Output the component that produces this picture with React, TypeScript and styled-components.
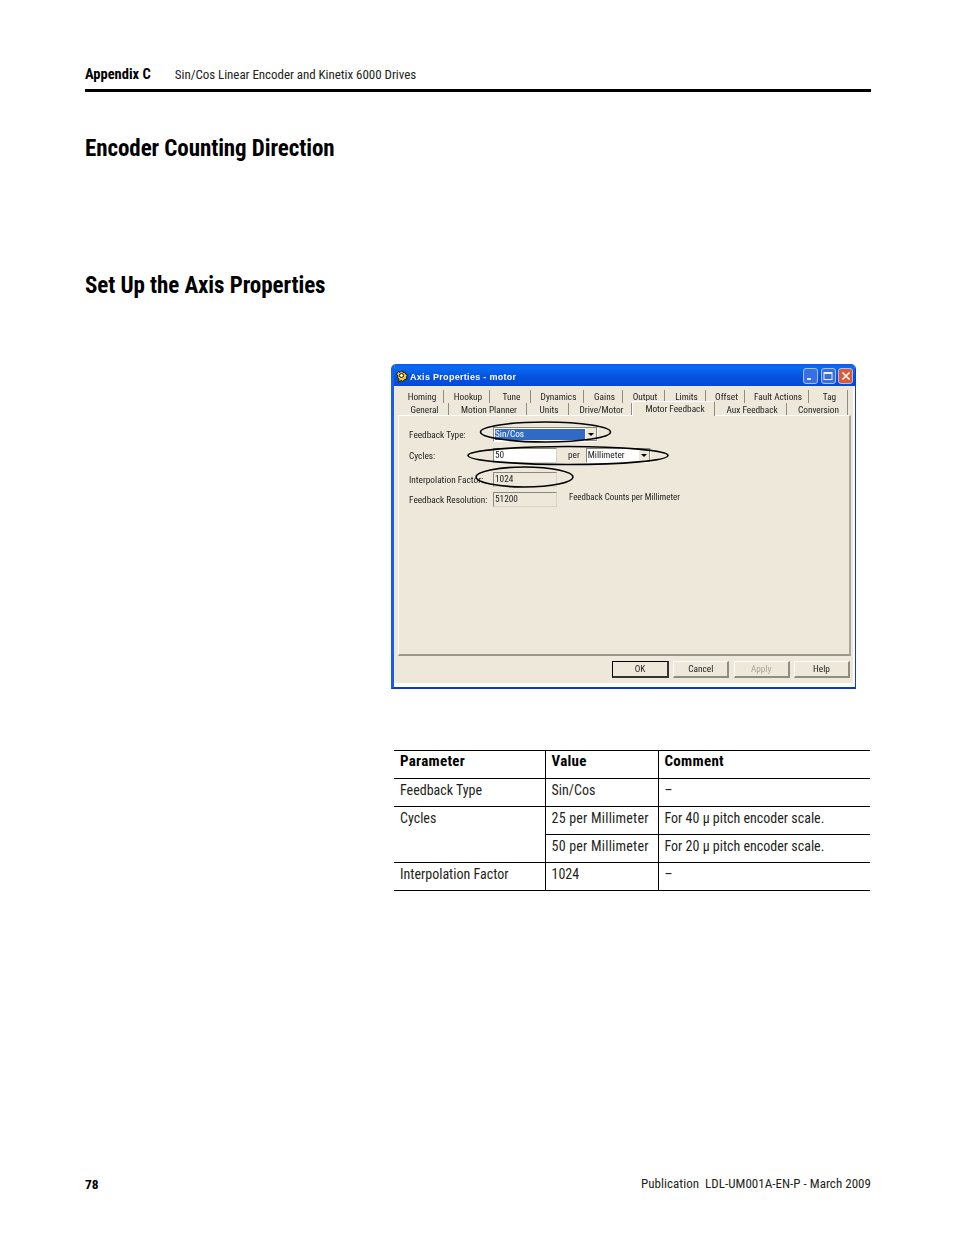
import React from "react";
import styled, { createGlobalStyle } from "styled-components";

const Global = createGlobalStyle`
  html, body { margin: 0; padding: 0; background: #fff; }
  body { font-family: "Roboto Condensed", "Liberation Sans", Arial, sans-serif; color: #231f20; }
`;

const Page = styled.div`
  width: 954px;
  height: 1235px;
  box-sizing: border-box;
  padding: 67px 83px 0 85px;
  display: flex;
  flex-direction: column;
  position: relative;
`;

const Header = styled.header`
  display: flex;
  align-items: flex-start;
  gap: 24px;
  height: 22px;
  border-bottom: 3px solid #000;
  font-size: 13px;
  line-height: 16px;
`;
const HeaderStrong = styled.b`
  font-size: 14.5px;
  font-weight: 700;
  color: #000;
`;
const HeaderTitle = styled.span`
  letter-spacing: -0.05px;
`;

const Heading = styled.h1`
  margin: 0;
  font-size: 23px;
  letter-spacing: -0.08px;
  line-height: 32px;
  font-weight: 700;
  color: #000;
`;
const FirstHeading = styled(Heading)`
  margin-top: 41px;
`;
const SecondHeading = styled(Heading)`
  margin-top: 105px;
`;

const Dialog = styled.div`
  margin: 62px 0 0 306px;
  width: 465px;
  height: 325px;
  box-sizing: border-box;
  border-left: 3px solid #1a5cf0;
  border-right: 1px solid #0a3fd0;
  border-bottom: 2px solid #0a3ac8;
  border-radius: 5px 5px 0 0;
  background: #fff;
  font-family: "Roboto Condensed", "Liberation Sans", Arial, sans-serif;
  font-size: 9.3px;
  color: #222;
  display: flex;
  flex-direction: column;
  position: relative;
  overflow: hidden;
  filter: blur(0.3px);
`;

const TitleBar = styled.div`
  height: 22px;
  flex: none;
  margin: 0 -1px 0 -3px;
  padding: 2px 3px 0 5px;
  box-sizing: border-box;
  display: flex;
  align-items: center;
  gap: 1px;
  background: linear-gradient(180deg, #0a5ce6 0%, #0a6cf2 15%, #0554e0 55%, #0449d6 100%);
  color: #fff;
  font-family: "Liberation Sans", Arial, sans-serif;
  font-size: 9px;
  font-weight: 700;
`;
const TitleText = styled.span`
  flex: 1;
  padding: 1px 0 0 1px;
  letter-spacing: 0.3px;
`;
const WinButtons = styled.div`
  display: flex;
  gap: 2.5px;
`;
const WinButton = styled.span<{ $close?: boolean }>`
  width: 15px;
  height: 16px;
  box-sizing: border-box;
  border: 1px solid #a9c0ef;
  border-radius: 3px;
  background: ${(p) => (p.$close ? "#dc5a34" : "#3a6fe4")};
  display: flex;
  align-items: center;
  justify-content: center;
`;

const Content = styled.div`
  flex: none;
  height: 297px;
  margin-right: 2px;
  background: #ede8da;
  display: flex;
  flex-direction: column;
`;

const Tabs = styled.div`
  flex: none;
  padding: 4px 0 0 4px;
  display: flex;
  flex-direction: column;
`;
const TabRow = styled.div<{ $h: number }>`
  height: ${(p) => p.$h}px;
  display: flex;
  align-items: stretch;
`;
const Tab = styled.span<{ $w: number; $active?: boolean }>`
  width: ${(p) => p.$w}px;
  flex: none;
  text-align: center;
  line-height: 12px;
  box-sizing: border-box;
  padding: 1px 0 0 3px;
  white-space: nowrap;
  border-right: 1px solid #8f8d80;
  ${(p) =>
    p.$active
      ? "margin-top: -2px; height: 15px; border-left: 1px solid #fff; border-top: 1px solid #fff; background: #ede8da; position: relative; z-index: 1;"
      : ""}
`;

const Panel = styled.div`
  flex: none;
  height: 241px;
  margin: 0 2px 0 4px;
  box-sizing: border-box;
  border-top: 1px solid #fff;
  border-left: 1px solid #fff;
  border-right: 2px solid #aaa89a;
  border-bottom: 2px solid #989686;
  padding: 11px 0 0 10px;
  display: grid;
  grid-template-columns: 84px auto;
  grid-template-rows: 21px 24px 20px 20px;
  justify-content: start;
`;
const FieldLabel = styled.span`
  line-height: 15px;
  white-space: nowrap;
`;
const FieldRow = styled.div`
  display: flex;
  align-items: flex-start;
`;
const Combo = styled.div<{ $w: number }>`
  width: ${(p) => p.$w}px;
  height: 15px;
  box-sizing: border-box;
  background: #fff;
  border-top: 1px solid #8a887c;
  border-left: 1px solid #8a887c;
  border-right: 1px solid #fff;
  border-bottom: 1px solid #fff;
  display: flex;
  align-items: stretch;
  line-height: 12px;
  padding-left: 1px;
`;
const ComboValue = styled.span<{ $selected?: boolean }>`
  flex: 1;
  ${(p) => (p.$selected ? "background: #316ac5; color: #fff; margin: 1px 0; line-height: 10px;" : "")}
`;
const ComboArrow = styled.span`
  width: 12px;
  box-sizing: border-box;
  background: #ede8da;
  border-left: 1px solid #fff;
  border-right: 1px solid #8a887c;
  border-bottom: 1px solid #8a887c;
  display: flex;
  align-items: center;
  justify-content: center;
`;
const TextBox = styled.div<{ $readonly?: boolean }>`
  width: 64px;
  height: 15px;
  box-sizing: border-box;
  background: ${(p) => (p.$readonly ? "#ede8da" : "#fff")};
  border-top: 1px solid #8a887c;
  border-left: 1px solid #8a887c;
  border-right: 1px solid #d8d5c6;
  border-bottom: 1px solid #d8d5c6;
  padding-left: 1px;
  line-height: 11px;
`;
const Per = styled.span`
  margin: 0 6px 0 11px;
  line-height: 14px;
`;
const Counts = styled.span`
  margin-left: 12px;
  line-height: 11px;
  font-size: 8.9px;
  white-space: nowrap;
`;

const ButtonRow = styled.div`
  flex: 1;
  display: flex;
  justify-content: flex-end;
  gap: 4.33px;
  padding: 5px 3px 0 0;
`;
const DlgButton = styled.span<{ $default?: boolean; $disabled?: boolean }>`
  width: 56px;
  height: 17px;
  box-sizing: border-box;
  text-align: center;
  line-height: 14px;
  border-top: 1px solid #fff;
  border-left: 1px solid #fff;
  border-right: 2px solid #8f8d80;
  border-bottom: 2px solid #8f8d80;
  color: ${(p) => (p.$disabled ? "#a8a698" : "#222")};
  ${(p) => (p.$default ? "width: 57px; border: 1px solid #000; border-right: 2px solid #333; border-bottom: 2px solid #333;" : "")}
`;

const Ellipses = styled.svg`
  position: absolute;
  left: -3px;
  top: 0;
  pointer-events: none;
`;

const Table = styled.table`
  margin: 61px 0 0 309px;
  width: 476px;
  border-collapse: collapse;
  table-layout: fixed;
  font-size: 14px;
  line-height: 16px;
`;
const Th = styled.th`
  text-align: left;
  font-size: 15px;
  letter-spacing: 0.3px;
  font-weight: 700;
  color: #000;
  height: 28px;
  padding: 0 6px 7px;
  box-sizing: border-box;
  border-top: 1px solid #000;
  border-bottom: 1px solid #000;
  & + & { border-left: 1px solid #000; }
`;
const Td = styled.td`
  height: 28px;
  padding: 0 6px 6px;
  box-sizing: border-box;
  vertical-align: middle;
  white-space: nowrap;
  border-bottom: 1px solid #000;
  & + & { border-left: 1px solid #000; }
`;
const SpanTd = styled(Td)`
  vertical-align: top;
  padding-top: 3px;
  border-right: 1px solid #000;
`;
const WideTd = styled(Td)`
  letter-spacing: 0.22px;
`;

const Footer = styled.footer`
  position: absolute;
  left: 85px;
  right: 83px;
  top: 1176px;
  display: flex;
  justify-content: space-between;
  font-size: 13px;
  letter-spacing: 0.03px;
  line-height: 16px;
`;
const PageNum = styled.b`
  font-size: 13.5px;
  color: #000;
`;

const row1: [string, number][] = [["Homing", 46], ["Hookup", 46], ["Tune", 41], ["Dynamics", 53], ["Gains", 39], ["Output", 42], ["Limits", 41], ["Offset", 39], ["Fault Actions", 64], ["Tag", 39]];
const row2: [string, number][] = [["General", 51], ["Motion Planner", 78], ["Units", 42], ["Drive/Motor", 63]];
const row2b: [string, number][] = [["Aux Feedback", 72], ["Conversion", 61]];

const Arrow = () => (
  <svg width="6" height="3" viewBox="0 0 6 3"><path d="M0 0h6L3 3z" fill="#000" /></svg>
);

export default function App() {
  return (
    <Page>
      <Global />
      <Header>
        <HeaderStrong>Appendix C</HeaderStrong>
        <HeaderTitle>Sin/Cos Linear Encoder and Kinetix 6000 Drives</HeaderTitle>
      </Header>
      <FirstHeading>Encoder Counting Direction</FirstHeading>
      <SecondHeading>Set Up the Axis Properties</SecondHeading>
      <Dialog>
        <TitleBar>
          <svg width="12" height="13" viewBox="0 0 12 13">
            <path d="M0.5 4L2.5 1.5 4 2.5 6 0.5 7 2.5 9 2 9.5 4 11.5 5 10.5 7 11 9 8.5 9.5 7 11.5 5 10.5 2.5 12.5 3 9 1.5 8 2 6z" fill="#eec72e" stroke="#1a1a1a" strokeWidth="1" />
            <circle cx="5.5" cy="5.5" r="2" fill="#fff" stroke="#1a1a1a" strokeWidth="1" />
          </svg>
          <TitleText>Axis Properties - motor</TitleText>
          <WinButtons>
            <WinButton>
              <svg width="10" height="10" viewBox="0 0 10 10"><rect x="1" y="7" width="4" height="2" fill="#dfe8fb" /></svg>
            </WinButton>
            <WinButton>
              <svg width="10" height="10" viewBox="0 0 10 10"><rect x="1" y="1.5" width="8" height="7" fill="none" stroke="#eef" strokeWidth="1" /><rect x="1" y="1" width="8" height="2" fill="#eef" /></svg>
            </WinButton>
            <WinButton $close>
              <svg width="10" height="10" viewBox="0 0 10 10"><path d="M1.5 1.5l7 7M8.5 1.5l-7 7" stroke="#fff" strokeWidth="1.7" /></svg>
            </WinButton>
          </WinButtons>
        </TitleBar>
        <Content>
          <Tabs>
            <TabRow $h={13}>
              {row1.map(([t, w]) => (
                <Tab key={t} $w={w}>{t}</Tab>
              ))}
            </TabRow>
            <TabRow $h={12}>
              {row2.map(([t, w]) => (
                <Tab key={t} $w={w}>{t}</Tab>
              ))}
              <Tab $w={83} $active>Motor Feedback</Tab>
              {row2b.map(([t, w]) => (
                <Tab key={t} $w={w}>{t}</Tab>
              ))}
            </TabRow>
          </Tabs>
          <Panel>
            <FieldLabel>Feedback Type:</FieldLabel>
            <FieldRow>
              <Combo $w={105}>
                <ComboValue $selected>Sin/Cos</ComboValue>
                <ComboArrow><Arrow /></ComboArrow>
              </Combo>
            </FieldRow>
            <FieldLabel>Cycles:</FieldLabel>
            <FieldRow>
              <TextBox>50</TextBox>
              <Per>per</Per>
              <Combo $w={65}>
                <ComboValue>Millimeter</ComboValue>
                <ComboArrow><Arrow /></ComboArrow>
              </Combo>
            </FieldRow>
            <FieldLabel>Interpolation Factor:</FieldLabel>
            <FieldRow>
              <TextBox $readonly>1024</TextBox>
            </FieldRow>
            <FieldLabel>Feedback Resolution:</FieldLabel>
            <FieldRow>
              <TextBox $readonly>51200</TextBox>
              <Counts>Feedback Counts per Millimeter</Counts>
            </FieldRow>
          </Panel>
          <ButtonRow>
            <DlgButton $default>OK</DlgButton>
            <DlgButton>Cancel</DlgButton>
            <DlgButton $disabled>Apply</DlgButton>
            <DlgButton>Help</DlgButton>
          </ButtonRow>
        </Content>
        <Ellipses width="465" height="325" viewBox="0 0 465 325">
          <g fill="none" stroke="#000" strokeWidth="1.6">
            <ellipse cx="154.5" cy="68" rx="65" ry="10" />
            <ellipse cx="177" cy="91.5" rx="100" ry="9" />
            <ellipse cx="133.5" cy="113" rx="48.5" ry="10" />
          </g>
        </Ellipses>
      </Dialog>
      <Table>
        <colgroup>
          <col style={{ width: 151 }} />
          <col style={{ width: 113 }} />
          <col />
        </colgroup>
        <thead>
          <tr>
            <Th>Parameter</Th>
            <Th>Value</Th>
            <Th>Comment</Th>
          </tr>
        </thead>
        <tbody>
          <tr>
            <Td>Feedback Type</Td>
            <Td>Sin/Cos</Td>
            <Td>–</Td>
          </tr>
          <tr>
            <SpanTd rowSpan={2}>Cycles</SpanTd>
            <WideTd>25 per Millimeter</WideTd>
            <Td>For 40 µ pitch encoder scale.</Td>
          </tr>
          <tr>
            <WideTd>50 per Millimeter</WideTd>
            <Td>For 20 µ pitch encoder scale.</Td>
          </tr>
          <tr>
            <Td>Interpolation Factor</Td>
            <Td>1024</Td>
            <Td>–</Td>
          </tr>
        </tbody>
      </Table>
      <Footer>
        <PageNum>78</PageNum>
        <span>Publication&nbsp; LDL-UM001A-EN-P - March 2009</span>
      </Footer>
    </Page>
  );
}
